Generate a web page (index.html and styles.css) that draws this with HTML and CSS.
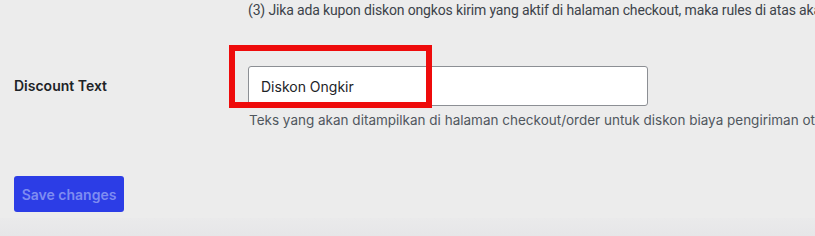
FILE: index.html
```html
<!DOCTYPE html>
<html>

<head>
    <link rel="stylesheet" href="styles.css">
</head>

<body>
    <div class="wrap">
        <p class="note">(3) Jika ada kupon diskon ongkos kirim yang aktif di halaman checkout, maka rules di atas akan diabaikan.</p>

        <div class="field-row">
            <label class="field-label" for="discount_text">Discount Text</label>
            <div class="field-body">
                <div class="input-holder">
                    <input type="text" id="discount_text" class="text-input" value="Diskon Ongkir">
                    <span class="highlight"></span>
                </div>
                <p class="description">Teks yang akan ditampilkan di halaman checkout/order untuk diskon biaya pengiriman otomatis.</p>
            </div>
        </div>

        <div class="submit-row">
            <button class="button-primary" disabled>Save changes</button>
        </div>
    </div>
    <div class="footer-fade"></div>
</body>

</html>
```

FILE: styles.css
```css
/* settings page */

html,
body {
    margin: 0;
    height: 100%;
    overflow: hidden;
}

body {
    background: #ececec;
    font-family: Inter, "Noto Sans", sans-serif;
    color: #1d2327;
    position: relative;
}

.wrap {
    padding: 0 0 0 14px;
}

/* the last line of the note above, clipped by the window */
.note {
    margin: 0;
    padding: 2px 0 0 234px;
    font-family: Roboto, sans-serif;
    font-size: 14px;
    line-height: 16px;
    color: #3c434a;
    white-space: nowrap;
    letter-spacing: -0.15px;
}

.field-row {
    display: flex;
    align-items: flex-start;
    margin-top: 48px;
}

.field-label {
    width: 234px;
    flex: none;
    font-size: 14px;
    font-weight: 600;
    line-height: 40px;
}

.field-body {
    white-space: nowrap;
}

.input-holder {
    position: relative;
    width: 400px;
}

.text-input {
    box-sizing: border-box;
    width: 400px;
    height: 40px;
    margin: 0;
    padding: 0 12px;
    border: 1px solid #8c8f94;
    border-radius: 3px;
    background: #fff;
    font-family: inherit;
    font-size: 14px;
    color: #1d2327;
}

/* red annotation drawn over the screenshot */
.highlight {
    position: absolute;
    left: -19px;
    top: -21px;
    width: 203px;
    height: 63px;
    box-sizing: border-box;
    border: 6px solid #ee0b0b;
    pointer-events: none;
}

.description {
    margin: 5px 0 0 1px;
    font-size: 13.5px;
    line-height: 18px;
    color: #50575e;
}

.submit-row {
    margin-top: 47px;
}

.button-primary {
    width: 110px;
    height: 36px;
    padding: 0;
    border: 0;
    border-radius: 3px;
    background: #2c3de6;
    color: #7e8cf1;
    font-family: inherit;
    font-size: 14px;
    font-weight: 600;
}

.footer-fade {
    position: absolute;
    left: 0;
    right: 0;
    bottom: 0;
    height: 18px;
    background: linear-gradient(#eaeaeb, #e6e6e8);
}
```
